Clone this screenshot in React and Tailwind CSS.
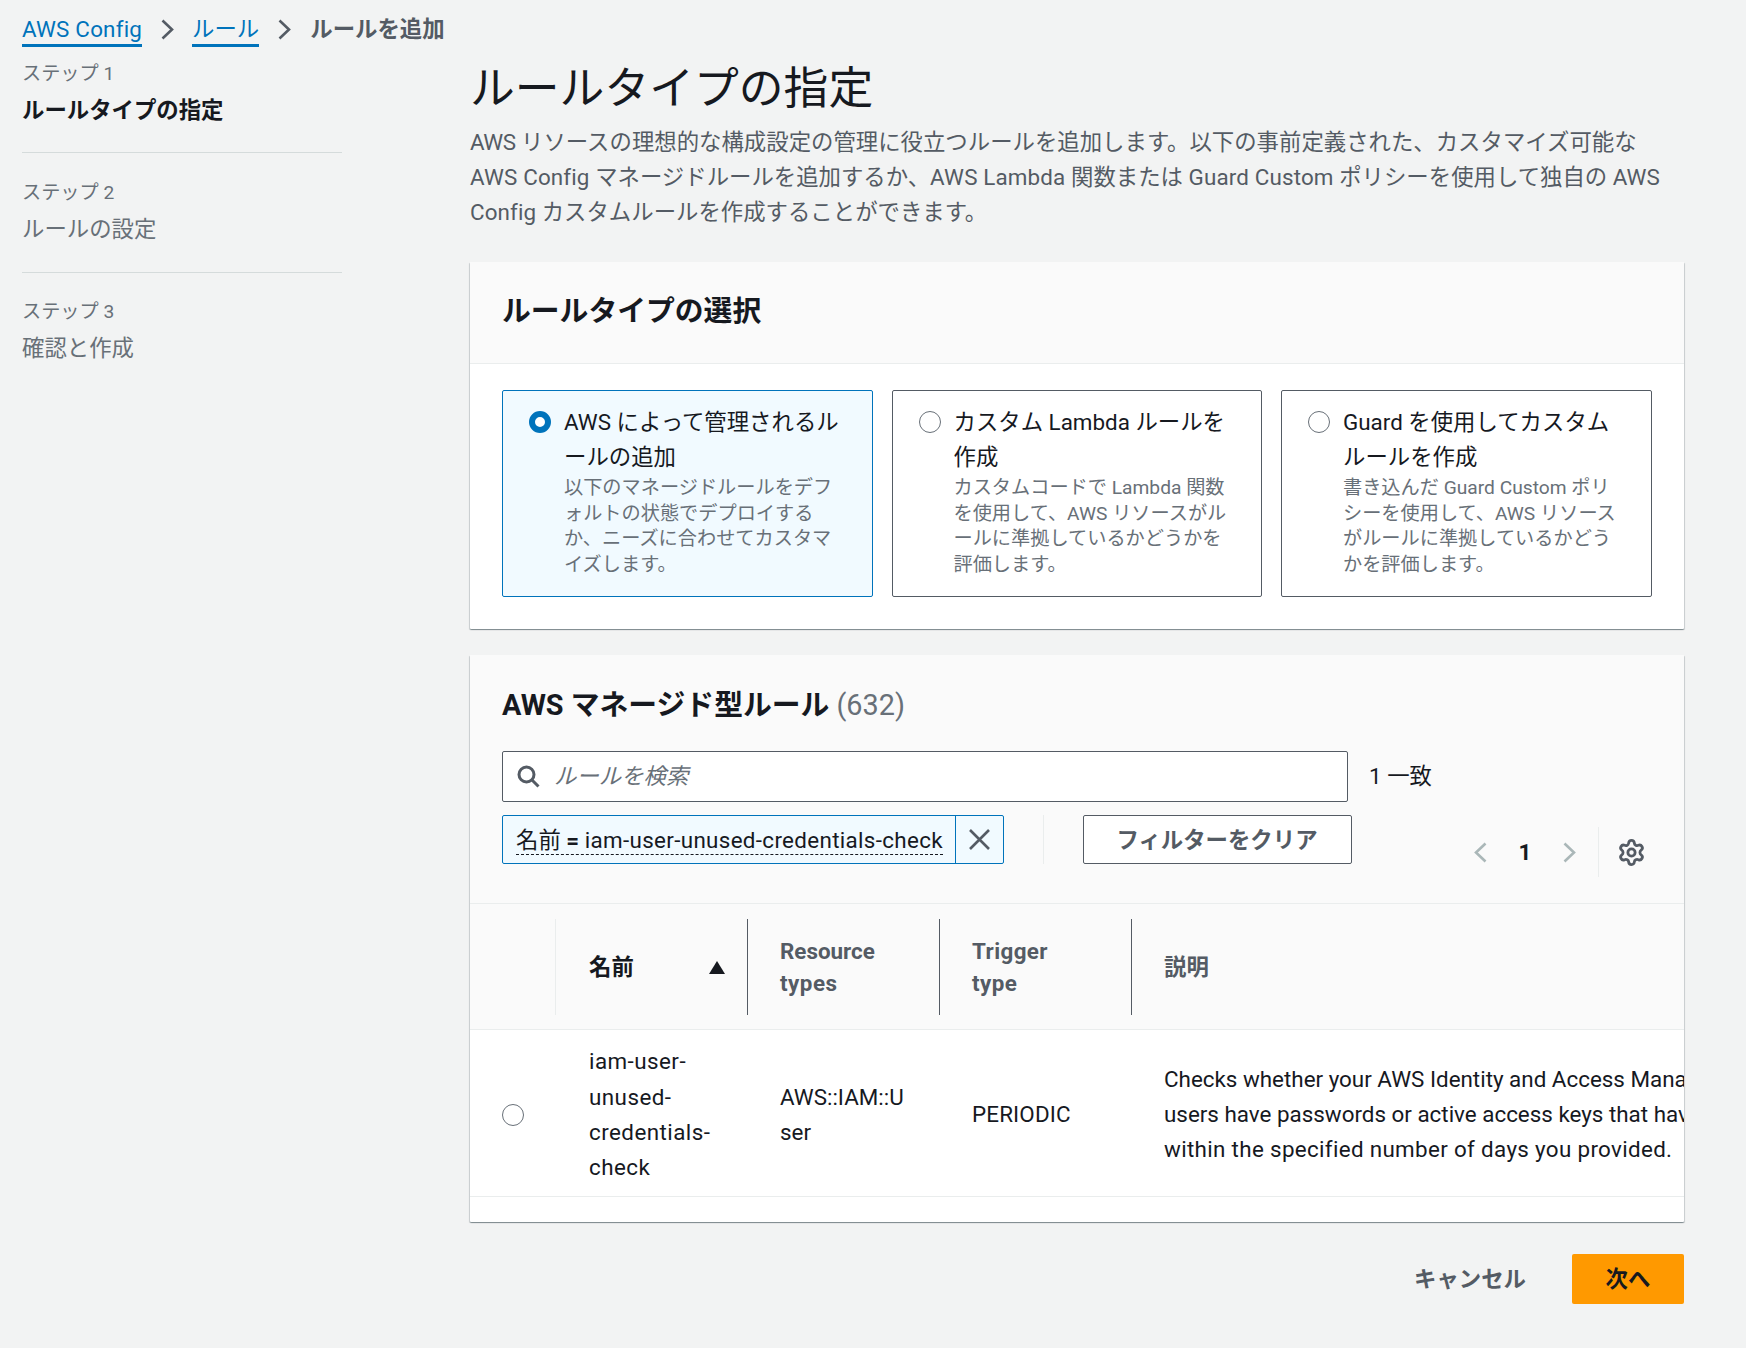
import { Settings } from 'lucide-react';

const stepsData = [
  { label: 'ステップ 1', name: 'ルールタイプの指定', active: true, box: 'h-[92px] border-b border-[#d5dbdb]', nameGap: 'mt-[6px]' },
  { label: 'ステップ 2', name: 'ルールの設定', box: 'h-[120px] pt-[27px] border-b border-[#d5dbdb]', nameGap: 'mt-[6px]' },
  { label: 'ステップ 3', name: '確認と作成', box: 'pt-[26px]', nameGap: 'mt-[6px]' },
];

const ruleOptions = [
  {
    title: ['AWS によって管理されるル', 'ールの追加'],
    desc: ['以下のマネージドルールをデフ', 'ォルトの状態でデプロイする', 'か、ニーズに合わせてカスタマ', 'イズします。'],
    selected: true,
  },
  {
    title: ['カスタム Lambda ルールを', '作成'],
    desc: ['カスタムコードで Lambda 関数', 'を使用して、AWS リソースがル', 'ールに準拠しているかどうかを', '評価します。'],
  },
  {
    title: ['Guard を使用してカスタム', 'ルールを作成'],
    desc: ['書き込んだ Guard Custom ポリ', 'シーを使用して、AWS リソース', 'がルールに準拠しているかどう', 'かを評価します。'],
  },
];

const Lines = ({ items }) =>
  items.map((line) => (
    <span key={line} className="block whitespace-nowrap">
      {line}
    </span>
  ));

const Chevron = ({ left = false, className = '' }) => (
  <svg viewBox="0 0 14 21" fill="none" stroke="currentColor" strokeWidth="2.6" className={className}>
    <path d={left ? 'M12.5 1.5 L3 10.5 L12.5 19.5' : 'M1.5 1.5 L11 10.5 L1.5 19.5'} />
  </svg>
);

const Radio = ({ selected = false }) =>
  selected ? (
    <span className="block w-[22px] h-[22px] shrink-0 rounded-full border-[6.5px] border-[#0073bb] bg-white" />
  ) : (
    <span className="block w-[22px] h-[22px] shrink-0 rounded-full border-[1.5px] border-[#687078] bg-white" />
  );

const RuleOption = ({ title, desc, selected }) => (
  <div
    className={`w-[370.5px] h-[207px] flex gap-[13px] pl-[26px] pt-[14px] rounded-[2px] border ${
      selected ? 'bg-[#f1faff] border-[#0073bb]' : 'bg-white border-[#545b64]'
    }`}
  >
    <div className="pt-[6px]">
      <Radio selected={selected} />
    </div>
    <div>
      <div className="text-[22.4px] leading-[35.2px] text-[#16191f]">
        <Lines items={title} />
      </div>
      <div className="text-[19.2px] leading-[25.6px] text-[#687078] -mt-[0.5px]">
        <Lines items={desc} />
      </div>
    </div>
  </div>
);

const cardClass =
  'bg-white rounded-[1px] shadow-[0_1px_1px_0_rgba(0,28,36,0.3),1px_1px_1px_0_rgba(0,28,36,0.15),-1px_1px_1px_0_rgba(0,28,36,0.15)]';

export default function App() {
  return (
    <div className="w-[1746px] h-[1348px] overflow-hidden bg-[#f2f3f3] text-[#16191f] text-[22.4px] leading-[35.2px] font-['Roboto','Noto_Sans_CJK_JP',sans-serif]">
      {/* Breadcrumb */}
      <nav className="flex items-end h-[47px] pl-[22px] text-[#545b64]">
        <span className="text-[#0073bb] border-b-[3px] border-[#0073bb] leading-[31px] h-[33px] tracking-[0.2px]">AWS Config</span>
        <Chevron className="w-[14px] h-[21px] ml-[19px] mr-[17px] mb-[7px]" />
        <span className="text-[#0073bb] border-b-[3px] border-[#0073bb] leading-[31px] h-[33px]">ルール</span>
        <Chevron className="w-[14px] h-[21px] ml-[19px] mr-[18px] mb-[7px]" />
        <span className="font-bold leading-[31px] h-[33px]">ルールを追加</span>
      </nav>

      <div className="flex pl-[22px]">
        {/* Steps sidebar */}
        <aside className="w-[320px] pt-[14px] shrink-0">
          {stepsData.map((step) => (
            <div key={step.label} className={step.box}>
              <div className="text-[19.2px] leading-[25.6px] text-[#687078]">{step.label}</div>
              <div className={`${step.nameGap} ${step.active ? 'font-bold text-[#16191f]' : 'text-[#687078]'}`}>{step.name}</div>
            </div>
          ))}
        </aside>

        {/* Main column */}
        <main className="ml-[128px] w-[1214px] shrink-0">
          <h1 className="text-[44.8px] leading-[57.6px] font-normal mt-[13px]">ルールタイプの指定</h1>
          <p className="text-[#545b64] mt-[7px] whitespace-nowrap">
            <span className="tracking-[-0.5px]">AWS</span> リソースの理想的な構成設定の管理に役立つルールを追加します。以下の事前定義された、カスタマイズ可能な
            <br />
            <span className="tracking-[0.15px]">AWS Config</span> マネージドルールを追加するか、<span className="tracking-[0.15px]">AWS Lambda</span> 関数または <span className="tracking-[0.15px]">Guard Custom</span> ポリシーを使用して独自の AWS
            <br />
            <span className="tracking-[0.1px]">Config</span> カスタムルールを作成することができます。
          </p>

          {/* Rule type card */}
          <section className={`${cardClass} mt-[32px] h-[367px]`}>
            <div className="h-[102px] bg-[#fafafa] border-b border-[#eaeded] px-[32px] pt-[32px]">
              <h2 className="text-[28.8px] leading-[35.2px] font-bold">ルールタイプの選択</h2>
            </div>
            <div className="flex gap-[19px] px-[32px] pt-[26px]">
              {ruleOptions.map((opt) => (
                <RuleOption key={opt.title[0]} {...opt} />
              ))}
            </div>
          </section>

          {/* Managed rules card */}
          <section className={`${cardClass} mt-[26px] h-[567px] overflow-hidden`}>
            <div className="h-[249px] bg-[#fafafa] border-b border-[#eaeded] px-[32px] pt-[33px]">
              <h2 className="text-[28.8px] leading-[35.2px] font-bold">
                AWS マネージド型ルール <span className="font-normal text-[#687078]">(632)</span>
              </h2>

              <div className="flex items-center mt-[28px]">
                <div className="w-[846px] h-[51px] flex items-center bg-white border border-[#545b64] rounded-[2px] pl-[14px]">
                  <svg viewBox="0 0 23 23" fill="none" stroke="#545b64" strokeWidth="3" className="w-[23px] h-[23px]">
                    <circle cx="9.5" cy="9.5" r="7.5" />
                    <path d="M15 15 L21.5 21.5" />
                  </svg>
                  <span className="ml-[14px] italic text-[#687078]">ルールを検索</span>
                </div>
                <span className="ml-[21px]">1 一致</span>
              </div>

              <div className="flex items-start mt-[13px]">
                <div className="w-[502px] h-[49px] flex bg-[#f1faff] border border-[#0073bb] rounded-[2px]">
                  <div className="w-[452px] pl-[13px] pt-[9px] whitespace-nowrap">
                    <span className="block w-fit border-b border-dashed border-[#16191f] leading-[31px] h-[30px]">
                      名前 <b>=</b> <span className="tracking-[0.33px]">iam-user-unused-credentials-check</span>
                    </span>
                  </div>
                  <div className="flex-1 flex items-center justify-center border-l border-[#0073bb]">
                    <svg viewBox="0 0 21 21" fill="none" stroke="#545b64" strokeWidth="2.6" className="w-[21px] h-[21px]">
                      <path d="M1 1 L20 20 M20 1 L1 20" />
                    </svg>
                  </div>
                </div>
                <div className="w-px h-[49px] bg-[#eaeded] ml-[39px]" />
                <button className="ml-[39px] w-[269px] h-[49px] pt-[1px] pr-[1px] bg-white border border-[#545b64] rounded-[2px] font-bold text-[#545b64]">
                  フィルターをクリア
                </button>
                <div className="ml-auto mt-[12px] h-[50px] flex items-center pr-[6px]">
                  <Chevron left className="w-[14px] h-[21px] text-[#aab7b8]" />
                  <span className="w-[76px] text-center font-bold">1</span>
                  <Chevron className="w-[14px] h-[21px] text-[#aab7b8]" />
                  <div className="w-px h-[50px] bg-[#eaeded] ml-[21px]" />
                  <Settings className="w-[29px] h-[29px] ml-[18px] text-[#545b64]" strokeWidth={2.3} />
                </div>
              </div>
            </div>

            {/* Table */}
            <div className="overflow-hidden">
              <div className="grid grid-cols-[85px_192px_192px_192px_1fr] h-[126px] bg-[#fafafa] border-b border-[#eaeded] pt-[15px] font-bold text-[#545b64] leading-[32px]">
                <div />
                <div className="h-[96px] border-l border-[#eaeded] flex items-center justify-between pl-[33px] pr-[22px] text-[#16191f]">
                  名前
                  <svg viewBox="0 0 16 13" className="w-[16px] h-[13px] fill-[#16191f]">
                    <path d="M8 0 L16 13 L0 13 Z" />
                  </svg>
                </div>
                <div className="h-[96px] border-l border-[#545b64] flex items-center pl-[32px]">
                  <span>
                    Resource
                    <br />
                    <span className="tracking-[0.5px]">types</span>
                  </span>
                </div>
                <div className="h-[96px] border-l border-[#545b64] flex items-center pl-[32px] tracking-[0.4px]">
                  <span>
                    Trigger
                    <br />
                    type
                  </span>
                </div>
                <div className="h-[96px] border-l border-[#545b64] flex items-center pl-[32px]">説明</div>
              </div>

              <div className="grid grid-cols-[85px_192px_192px_192px_1fr] h-[167px] pt-[3px] items-center bg-white border-b border-[#eaeded]">
                <div className="pl-[32px]">
                  <Radio />
                </div>
                <div className="pl-[34px] tracking-[0.45px]">
                  iam-user-
                  <br />
                  unused-
                  <br />
                  credentials-
                  <br />
                  check
                </div>
                <div className="pl-[33px]">
                  AWS::IAM::U
                  <br />
                  ser
                </div>
                <div className="pl-[33px] tracking-[0.15px]">PERIODIC</div>
                <div className="pl-[33px] whitespace-nowrap">
                  Checks whether your AWS Identity and Access Management (IAM)
                  <br />
                  users have passwords or active access keys that have not been used
                  <br />
                  <span className="tracking-[0.33px]">within the specified number of days you provided.</span>
                </div>
              </div>
            </div>
          </section>

          {/* Footer actions */}
          <div className="flex items-center justify-end mt-[32px]">
            <button className="font-bold text-[#545b64] mr-[46px]">キャンセル</button>
            <button className="w-[112px] h-[50px] bg-[#ff9900] rounded-[2px] font-bold text-[#16191f]">次へ</button>
          </div>
        </main>
      </div>
    </div>
  );
}
